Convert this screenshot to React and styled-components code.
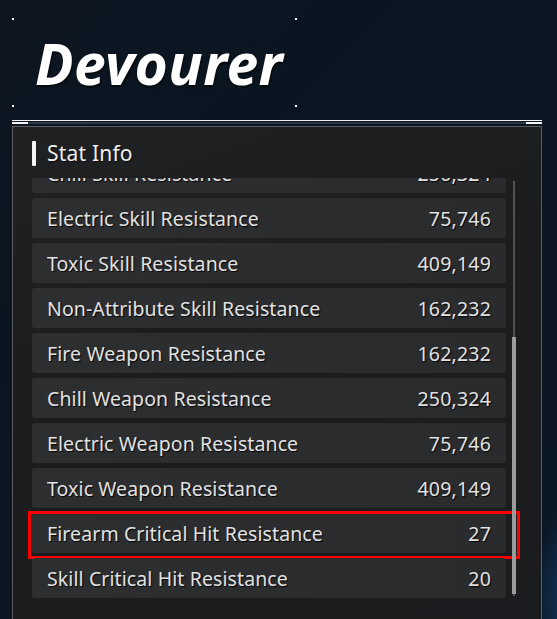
import React from "react";
import styled, { createGlobalStyle } from "styled-components";

const Global = createGlobalStyle`
  html, body { margin: 0; padding: 0; }
  body {
    background: #0b1520;
    font-family: "Noto Sans", "Open Sans", sans-serif;
    overflow: hidden;
  }
`;

const Page = styled.div`
  position: relative;
  width: 557px;
  height: 619px;
  box-sizing: border-box;
  padding: 18px 15px 0 12px;
  overflow: hidden;
  background:
    radial-gradient(ellipse 60px 140px at 575px 600px, rgba(40, 90, 160, 0.55), transparent 70%),
    linear-gradient(135deg, #0c1520 0%, #0b1622 60%, #0a1826 100%);
`;

const TitleBox = styled.div`
  position: relative;
  width: 285px;
  height: 89px;
  box-sizing: border-box;
  padding-left: 23px;
  display: flex;
  align-items: center;
`;

const Dot = styled.span`
  position: absolute;
  width: 2px;
  height: 2px;
  background: #fff;
  ${(p) => (p.$top ? "top: 0;" : "bottom: 0;")}
  ${(p) => (p.$left ? "left: 0;" : "right: 0;")}
`;

const Title = styled.h1`
  margin: 0;
  font-family: "Noto Sans", sans-serif;
  font-style: italic;
  font-weight: 700;
  font-size: 57px;
  line-height: 1;
  color: #fff;
  letter-spacing: 0.4px;
  text-shadow: 1px 2px 2px rgba(0, 0, 0, 0.6);
  transform: translateY(1px);
`;

const Decor = styled.div`
  margin-top: 13px;
  width: 530px;
  display: flex;
  flex-direction: column;
  gap: 1px;
`;

const TopLine = styled.div`
  height: 1px;
  background: #f2f2f2;
`;

const SubLine = styled.div`
  height: 2px;
  display: flex;
  background: #2c3946;
`;

const Cap = styled.div`
  width: 16px;
  background: #f2f2f2;
`;

const Spacer = styled.div`
  flex: 1;
`;

const Panel = styled.section`
  margin-top: 2px;
  width: 530px;
  height: 520px;
  box-sizing: border-box;
  border: 1px solid #5b5d60;
  border-bottom: none;
  background: linear-gradient(160deg, #202122 0%, #1b1c1e 45%, #1a1c1f 100%);
  display: flex;
  flex-direction: column;
`;

const Header = styled.div`
  display: flex;
  align-items: center;
  gap: 11px;
  padding: 14px 0 0 19px;
  height: 25px;
`;

const HeaderBar = styled.span`
  width: 4px;
  height: 25px;
  border-radius: 1px;
  background: #f4f4f4;
`;

const HeaderText = styled.h2`
  margin: 0;
  font-size: 21px;
  font-weight: 400;
  color: #f0f0f0;
  letter-spacing: 0.2px;
  text-shadow: 1px 1px 1px rgba(0, 0, 0, 0.7);
  transform: translateY(-1px);
`;

const Body = styled.div`
  margin-top: 12px;
  padding-left: 19px;
  display: flex;
  gap: 6px;
`;

const Viewport = styled.div`
  width: 474px;
  height: 420px;
  display: flex;
  flex-direction: column;
  justify-content: flex-end;
  gap: 5px;
  clip-path: inset(0 -30px -20px -20px);
`;

const Row = styled.div`
  position: relative;
  flex-shrink: 0;
  height: 40px;
  box-sizing: border-box;
  padding: 0 15px;
  border-radius: 3px;
  background: linear-gradient(90deg, #2d2e30 0%, #2a2b2d 100%);
  display: flex;
  align-items: center;
  justify-content: space-between;
  font-size: 19.5px;
  color: #e2e2e2;
  text-shadow: 1px 1px 1px rgba(0, 0, 0, 0.9);

  ${(p) =>
    p.$highlight &&
    `
    &::after {
      content: "";
      position: absolute;
      top: -2px;
      bottom: -6px;
      left: -4px;
      right: -14px;
      border: 3px solid #ff0000;
      pointer-events: none;
    }
  `}
`;

const Label = styled.span`
  letter-spacing: 0.1px;
`;

const Value = styled.span`
  letter-spacing: 0.2px;
`;

const Track = styled.div`
  position: relative;
  margin-top: 3px;
  width: 4px;
  height: 415px;
  display: flex;
  justify-content: center;
`;

const TrackLine = styled.div`
  width: 2px;
  height: 100%;
  background: #505254;
`;

const Thumb = styled.div`
  position: absolute;
  left: 0;
  bottom: 2px;
  width: 4px;
  background: #9a9b9c;
`;

const stats = [
  ["Max HP", "2,440"],
  ["Max Shield", "1,120"],
  ["DEF", "8,540"],
  ["Fire Skill Resistance", "162,232"],
  ["Chill Skill Resistance", "250,324"],
  ["Electric Skill Resistance", "75,746"],
  ["Toxic Skill Resistance", "409,149"],
  ["Non-Attribute Skill Resistance", "162,232"],
  ["Fire Weapon Resistance", "162,232"],
  ["Chill Weapon Resistance", "250,324"],
  ["Electric Weapon Resistance", "75,746"],
  ["Toxic Weapon Resistance", "409,149"],
  ["Firearm Critical Hit Resistance", "27", true],
  ["Skill Critical Hit Resistance", "20"],
];

export default function App() {
  const thumbHeight = 257;
  return (
    <>
      <Global />
      <Page>
        <TitleBox>
          <Dot $top $left />
          <Dot $top />
          <Dot $left />
          <Dot />
          <Title>Devourer</Title>
        </TitleBox>
        <Decor>
          <TopLine />
          <SubLine>
            <Cap />
            <Spacer />
            <Cap />
          </SubLine>
        </Decor>
        <Panel>
          <Header>
            <HeaderBar />
            <HeaderText>Stat Info</HeaderText>
          </Header>
          <Body>
            <Viewport>
              {stats.map(([label, value, hl]) => (
                <Row key={label} $highlight={hl}>
                  <Label>{label}</Label>
                  <Value>{value}</Value>
                </Row>
              ))}
            </Viewport>
            <Track>
              <TrackLine />
              <Thumb style={{ height: thumbHeight }} />
            </Track>
          </Body>
        </Panel>
      </Page>
    </>
  );
}
